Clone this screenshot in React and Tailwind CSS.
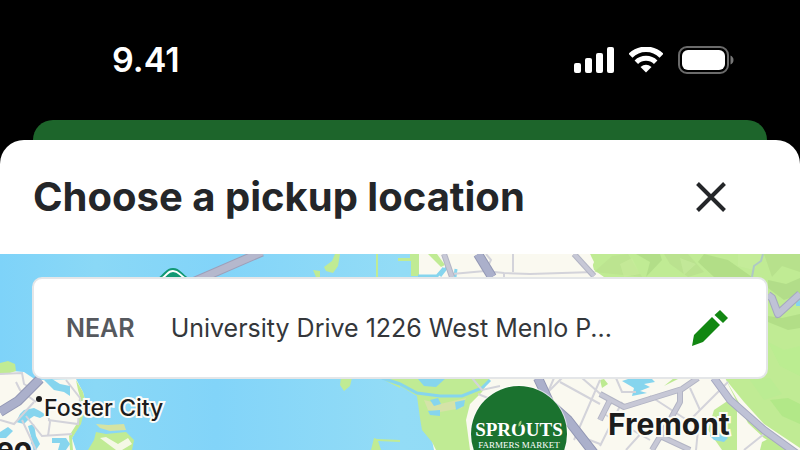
import { useId } from "react"

const shorelines = [
  "M0 370L24 372L36 380L76 379L83 392L86 404L80 424L72 438L76 450H0Z",
  "M418 254H800V450H500L434 450L430 430L440 410L436 396L418 390Z",
]

const parks = [
  "M0 363L8 361L15 364L16 371L10 373H0Z",
  "M335 254H340L338 266L333 273L326 271L324 267L332 261Z",
  "M313 270L320 271V277H316Z",
  "M376 254H378V277H376Z",
  "M398 258H410V254H419V276H411V261H398Z",
  "M341 378H352L350 386L344 391L340 385Z",
  "M382 378H400V388L386 381Z",
  "M96 432L106 434L126 432L134 440L132 450H88L94 440Z",
  "M374 438L377 439L400 440V442L378 441L381 450H371Z",
  "M400 378H490L482 392L470 404L466 420L470 450H436L432 442L422 430L420 418L417 396L400 386Z",
  "M590 254H800V450H784L764 438L748 423L740 408L726 380L700 277H604L594 270Z",
  "M428 254H437L445 265L441 267Z",
  "M714 410L732 398L737 408V450H722L708 430Z",
  "M76 380L83 392L86 404L81 424L72 438L73 450H70L69 436L78 422L82 404L78 390Z",
]

const waterways = [
  "M382 378L400 384L417 393L440 396L462 396L482 388L490 380",
  "M418 276H437L444 268",
  "M440 276L447 267M455 277L456 269",
]

const ponds = [
  "M44 380L52 379L60 384L70 386V396L64 392L54 390Z",
  "M430 400L438 398L441 404L434 406ZM455 402L465 400L464 406L456 410ZM428 411L440 410V416L430 415Z",
  "M418 379L446 378L436 387L424 386Z",
  "M628 379H652L655 382L644 384L650 387L640 391L647 393L632 396L634 388L622 381Z",
  "M712 430L716 435L722 433L728 438L724 442L714 440L710 436Z",
  "M24 410L34 408L40 411L46 415L40 418L34 416L28 420L24 424L16 422L20 414Z",
  "M52 438H66L70 444L66 450H58L60 443H52Z",
  "M28 426L34 424L36 436L40 444L36 450H28L32 440Z",
  "M0 432L8 427L13 431L6 438H0Z",
  "M796 302L800 300V306H796Z",
]

const minorRoads = [
  "M0 374L22 373L24 384L34 390M16 382L20 390L36 402M22 420L36 450",
  "M0 420L14 424L34 402M26 416L42 436L72 434M46 410L50 422L48 436",
  "M66 380L80 398L78 424L48 420",
  "M452 274L485 271L504 273L530 274L594 272M485 272L491 260L486 254",
  "M504 273V277M513 254V272",
  "M554 378L548 392M560 382L600 404",
  "M600 380L574 440M582 378L612 404",
  "M540 400L562 378M600 446L622 402M616 378L622 392L636 392",
  "M604 414L650 440",
  "M650 396L690 422M690 388L700 410",
  "M728 382L700 410L680 430",
  "M626 450L644 430M764 434L744 450",
  "M472 378L482 390L500 386M478 394L488 398",
  "M574 434L600 444M696 450L698 430",
]

const majorRoads = [
  "M600 394L624 407L682 389L698 378",
  "M680 390L680 402L670 420L652 450M660 436L690 450",
  "M574 254L594 276",
  "M444 254L452 277",
  "M600 420L610 400",
]

const highways = [
  "M714 378L730 400L764 430L800 456",
  "M768 295L772 298L778 314L800 294",
]

const freeways = [
  "M0 412L18 401L40 379",
  "M478 254L492 277",
  "M538 378L550 404L568 420L596 456",
]

const hills = [
  ["M594 272L612 256L628 254L642 277Z", "#b9e08d"],
  ["M636 254L650 262L646 277L662 260L660 254Z", "#a9d581"],
  ["M664 254L688 254L704 272L688 277L670 264Z", "#b5dc8c"],
  ["M704 254L728 260L752 277H714L698 262Z", "#a8d57f"],
  ["M738 254H764L754 270L738 266Z", "#c7ec9c"],
  ["M764 254H800V272L782 266L772 277Z", "#b0db87"],
  ["M620 264L632 258L640 274L624 277Z", "#c9ed9d"],
  ["M680 258L696 264L684 275Z", "#c8ed9e"],
  ["M768 280L786 284L800 278V294L784 300L768 288Z", "#a8d382"],
  ["M768 316L782 318L800 314V328L788 330L768 322Z", "#a9d57f"],
  ["M768 342L784 350L800 346V376L780 366Z", "#b7ee90"],
  ["M750 380L770 378L782 394L764 400Z", "#b8ed93"],
  ["M770 400L788 398L800 404V424L782 416Z", "#a8e680"],
]

function Roads({ paths, edge, fill, width }) {
  return (
    <g fill="none" strokeLinejoin="round">
      {paths.map((d) => (
        <path key={d} d={d} stroke={edge} strokeWidth={width} />
      ))}
      {paths.map((d) => (
        <path key={d} d={d} stroke={fill} strokeWidth={width - 2} />
      ))}
    </g>
  )
}

function MapCanvas() {
  const water = useId()
  return (
    <svg
      aria-hidden="true"
      viewBox="0 254 800 196"
      preserveAspectRatio="xMidYMin slice"
      className="absolute inset-0 h-full w-full"
    >
      <defs>
        <linearGradient id={water} x1="0" y1="0" x2="1" y2="0">
          <stop offset="0" stopColor="#7ed3f9" />
          <stop offset="0.12" stopColor="#8ad8f6" />
          <stop offset="0.27" stopColor="#82d4f9" />
          <stop offset="0.5" stopColor="#93dcf6" />
          <stop offset="1" stopColor="#8ad8f6" />
        </linearGradient>
      </defs>
      <rect y="254" width="800" height="196" fill={`url(#${water})`} />
      <g fill="#faf9f0">
        {shorelines.map((d) => (
          <path key={d} d={d} />
        ))}
      </g>
      <g fill="#c0eb94">
        {parks.map((d) => (
          <path key={d} d={d} />
        ))}
      </g>
      <path d="M96 424L108 425L124 424L126 430L110 431L100 428Z" fill="#d5e3a3" />
      <path d="M100 438L106 437L118 444L128 438L132 444L122 450H116Z" fill="#f5f8e6" />
      <path d="M424 400L440 404L466 398L462 408L440 412L428 410Z" fill="#d5e3a8" />
      <path d="M590 254L594 262L590 272L586 264Z" fill="#faf9f0" />
      <path d="M726 380L742 408L764 434L784 450H800V448L764 424L744 402Z" fill="#faf9f0" />
      <path
        d="M762 442L770 438L790 450H760ZM664 386L674 378H680ZM600 380L604 379L608 384L602 388Z"
        fill="#bdea91"
      />
      {hills.map(([d, color]) => (
        <path key={d} d={d} fill={color} opacity="0.6" />
      ))}
      <g fill="#86d5ee">
        {ponds.map((d) => (
          <path key={d} d={d} />
        ))}
      </g>
      <g fill="none" stroke="#86d5ee" strokeWidth="3">
        {waterways.map((d) => (
          <path key={d} d={d} />
        ))}
      </g>
      <path d="M763 254L761 261L754 266L752 277" fill="none" stroke="#aec8c5" strokeWidth="2" />
      <g fill="none" stroke="#d3d3da" strokeWidth="2">
        {minorRoads.map((d) => (
          <path key={d} d={d} />
        ))}
      </g>
      <Roads paths={majorRoads} edge="#b2b4c4" fill="#c7c8d6" width={6} />
      <Roads paths={highways} edge="#a5a8c0" fill="#bfc2d6" width={8} />
      <Roads paths={freeways} edge="#9297b4" fill="#abb0cb" width={10} />
      <Roads paths={["M186 285L262 252"]} edge="#9d9fb9" fill="#b5b8cd" width={9} />
      <path d="M157 279C164 274 166 268 173 268S182 274 190 279V290H157Z" fill="#119873" />
      <path
        d="M161 279C168 275 167 271 173 271S179 275 186 279"
        fill="none"
        stroke="#fff"
        strokeWidth="2"
      />
      <circle cx="39" cy="399" r="3" fill="#1c1c1c" />
    </svg>
  )
}

function StatusIcons() {
  return (
    <div className="flex items-center gap-[15px]" aria-hidden="true">
      <svg width="40" height="26" viewBox="0 0 40 26" fill="#fff">
        <rect x="0" y="16" width="7" height="10" rx="2" />
        <rect x="11" y="11" width="7" height="15" rx="2" />
        <rect x="22" y="6" width="7" height="20" rx="2" />
        <rect x="33" y="0" width="7" height="26" rx="2" />
      </svg>
      <svg width="34" height="26" viewBox="0 0 34 26" fill="none" stroke="#fff">
        <path d="M1.500 8.700A22 22 0 0 1 32.500 8.700" strokeWidth="5.500" />
        <path d="M7.300 15.200A14 14 0 0 1 26.700 15.200" strokeWidth="5" />
        <path d="M17 25.500L11.500 20Q17 15.500 22.500 20Z" fill="#fff" stroke="none" />
      </svg>
      <svg width="56" height="28" viewBox="0 0 56 28">
        <rect x="1" y="1" width="49" height="26" rx="8" fill="none" stroke="#6b6b6b" strokeWidth="2" />
        <rect x="4" y="4" width="43" height="20" rx="6" fill="#fff" />
        <path d="M52.500 9.500Q55.500 11 55.500 14T52.500 18.500Z" fill="#777" />
      </svg>
    </div>
  )
}

function MapLabel({ className, children }) {
  return (
    <span
      className={`absolute whitespace-nowrap text-[#1c1c1c] [paint-order:stroke_fill] [-webkit-text-stroke:4px_#fbfbf6] ${className}`}
    >
      {children}
    </span>
  )
}

function StorePin() {
  return (
    <div className="absolute left-[calc(50%+71px)] top-[132px] flex size-24 flex-col items-center rounded-full bg-[#1b722f] pt-[34px] font-['Liberation_Serif',serif] text-white ring-1 ring-white/60">
      <span className="flex items-center text-[19px] leading-5 font-bold">
        SPR
        <span className="relative">
          O
          <svg className="absolute top-0 left-1" width="9" height="8" viewBox="0 0 10 8" aria-hidden="true">
            <path d="M0 0H10V4L5 6L0 4Z" fill="#1b722f" />
            <path d="M4 7Q3 2 7 0Q8 4 4 7Z" fill="#a9cf7a" />
          </svg>
        </span>
        UTS
      </span>
      <span className="whitespace-nowrap text-[9px] leading-[10px]">FARMERS MARKET</span>
    </div>
  )
}

export default function App() {
  return (
    <div className="flex h-screen flex-col overflow-hidden bg-black font-['Inter','Liberation_Sans',sans-serif]">
      <header className="flex h-30 shrink-0 items-center justify-between pr-[66px] pl-28 text-white">
        <time className="text-[34px] leading-10 font-semibold">9.41</time>
        <StatusIcons />
      </header>
      <div className="mx-[33px] h-5 shrink-0 rounded-t-[20px] bg-[#1d652b]" />

      <main className="flex min-h-0 flex-1 flex-col overflow-hidden rounded-t-[24px] bg-white">
        <div className="flex h-[114px] shrink-0 items-center justify-between pr-[74px] pl-[33px]">
          <h1 className="whitespace-nowrap text-[40px] leading-12 font-bold text-[#242629]">
            Choose a pickup location
          </h1>
          <button type="button" aria-label="Close">
            <svg width="30" height="30" viewBox="0 0 30 30" fill="none" stroke="#242629" strokeWidth="4">
              <path d="M1.500 1.500L28.500 28.500M28.500 1.500L1.500 28.500" />
            </svg>
          </button>
        </div>

        <section aria-label="Map of pickup locations" className="relative flex-1 overflow-hidden px-8 pt-[23px]">
          <MapCanvas />
          <MapLabel className="top-[142px] left-11 text-[23px] leading-6 font-medium">Foster City</MapLabel>
          <MapLabel className="top-[176px] -left-1 text-[30px] leading-9 font-bold">eo</MapLabel>
          <MapLabel className="top-[152px] left-[calc(50%+208px)] text-[30px] leading-9 font-bold">Fremont</MapLabel>
          <StorePin />

          <div className="relative flex h-[102px] items-center rounded-[10px] border-2 border-[#e4e6e8] bg-white pr-[37px] pl-8">
            <span className="text-[25px] leading-8 font-semibold text-[#56595e]">NEAR</span>
            <span className="ml-9 flex-1 whitespace-nowrap text-[25px] leading-8 text-[#34373b]">
              University Drive 1226 West Menlo P...
            </span>
            <button type="button" aria-label="Edit location">
              <svg width="38" height="38" viewBox="0 0 38 38" fill="#128712">
                <path d="M1 37L3 26L21 8L29 16L12 33Z" />
                <path d="M23.500 6L29 1L37 9L32 14Z" />
              </svg>
            </button>
          </div>
        </section>
      </main>
    </div>
  )
}
